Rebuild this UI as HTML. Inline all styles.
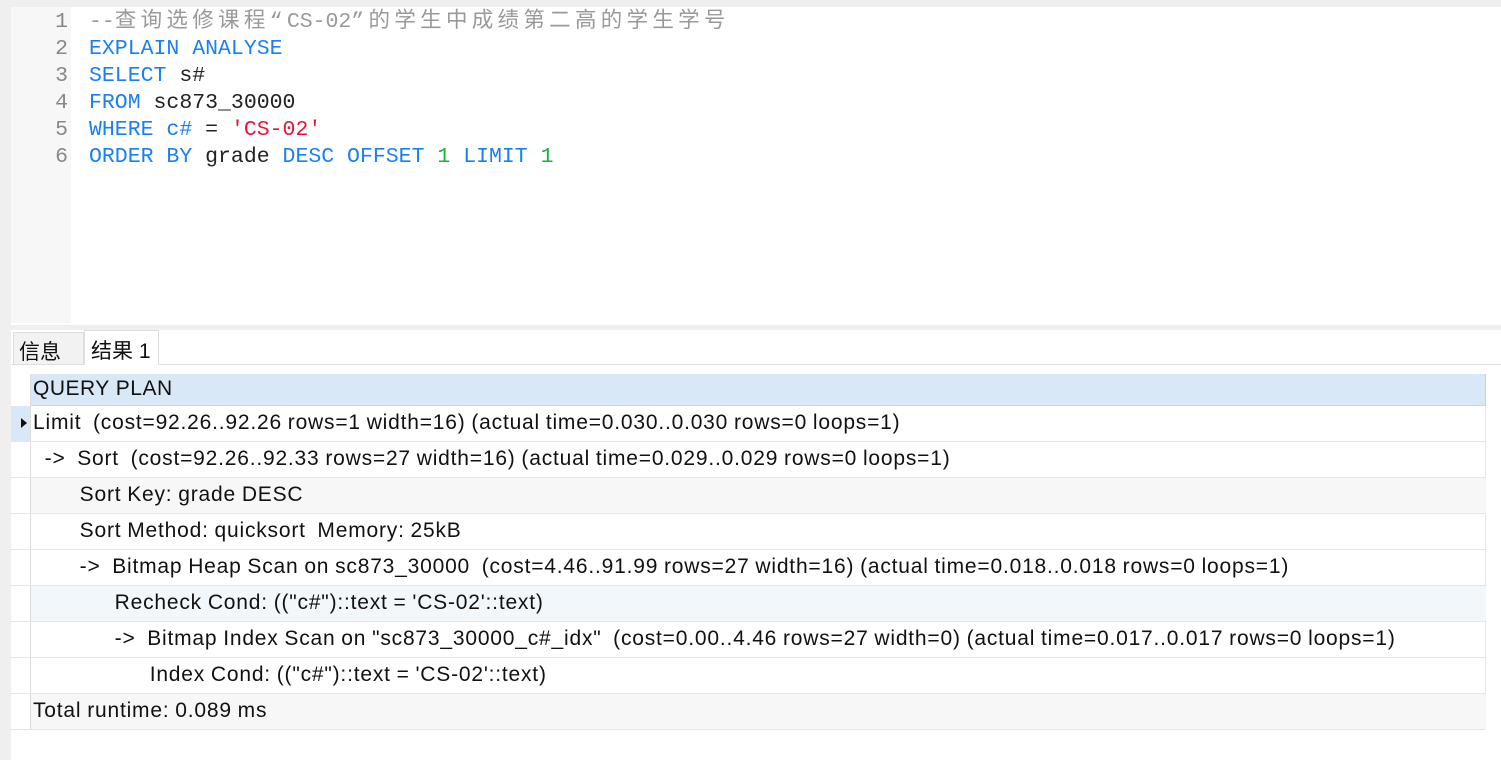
<!DOCTYPE html>
<html><head><meta charset="utf-8"><style>
*{margin:0;padding:0;box-sizing:border-box}
body{width:1501px;height:760px;background:#fff;position:relative;overflow:hidden;font-family:"Liberation Sans","Noto Sans CJK SC",sans-serif}
.abs{position:absolute}
.code{font-family:"Liberation Mono","Noto Sans CJK SC",monospace;font-size:21.5px;white-space:pre;line-height:27px}
.ln{color:#888;text-align:right;width:57px}
.k{color:#1a7ff0}.s{color:#e8133c}.n{color:#19b23c}.c{color:#999}.t{color:#222}
.cj{letter-spacing:4.3px}
.row{position:absolute;left:11px;width:1475px;height:36px;border-bottom:1px solid #e6e6e6;font-size:21px;letter-spacing:0.8px;word-spacing:-0.8px;white-space:pre;color:#111}
.row .h{position:absolute;left:0;top:0;width:20px;height:35px;border-right:1px solid #ddd;background:#fff}
.row .d{position:absolute;left:22px;top:5px}
</style></head><body>
<div class="abs" style="left:0;top:0;width:11px;height:760px;background:#efefef"></div>
<div class="abs" style="left:11px;top:0;width:1490px;height:7px;background:#efefef"></div>
<div class="abs" style="left:11px;top:7px;width:60px;height:316px;background:#f7f7f7"></div>
<div class="abs code ln" style="left:11px;top:9px">1<br>2<br>3<br>4<br>5<br>6</div>
<div class="abs code" style="left:89px;top:9px"><span class="c">--<span class="cj">查询选修课程“</span>CS-02<span class="cj">”的学生中成绩第二高的学生学号</span></span>
<span class="k">EXPLAIN ANALYSE</span>
<span class="k">SELECT</span> <span class="t">s#</span>
<span class="k">FROM</span> <span class="t">sc873_30000</span>
<span class="k">WHERE</span> <span class="k">c#</span> <span class="t">=</span> <span class="s">'CS-02'</span>
<span class="k">ORDER BY</span> <span class="t">grade</span> <span class="k">DESC OFFSET</span> <span class="n">1</span> <span class="k">LIMIT</span> <span class="n">1</span></div>
<div class="abs" style="left:11px;top:325px;width:1490px;height:5px;background:#efefef"></div>
<div class="abs" style="left:11px;top:364px;width:1490px;height:1px;background:#ddd"></div>
<div class="abs" style="left:13px;top:332px;width:71px;height:33px;background:#f2f2f2;border:1px solid #ddd;font-size:21px;padding:3px 0 0 5px;color:#111">信息</div>
<div class="abs" style="left:84px;top:330px;width:75px;height:35px;background:#fff;border:1px solid #ddd;border-bottom:none;font-size:21px;padding:4px 0 0 6px;color:#111">结果 1</div>
<div class="abs" style="left:30px;top:374px;width:1456px;height:32px;background:#d8e8f6;border-bottom:1px solid #c8d8e6;border-right:1px solid #c8d0d8;font-size:21px;letter-spacing:0.5px;padding:3px 0 0 3px;color:#111">QUERY PLAN</div>
<div class="abs" style="left:11px;top:374px;width:20px;height:32px;background:#fff;border-right:1px solid #ddd"></div>
<div class="abs" style="left:1485px;top:406px;width:1px;height:324px;background:#e6e6e6"></div>

<div class="row" style="top:406px"><div class="h" style="background:#d8e8f6"><span style="position:absolute;left:10px;top:12px;border-left:6px solid #111;border-top:5px solid transparent;border-bottom:5px solid transparent"></span></div><div class="d">Limit  (cost=92.26..92.26 rows=1 width=16) (actual time=0.030..0.030 rows=0 loops=1)</div></div>
<div class="row" style="top:442px"><div class="h"></div><div class="d">  ->  Sort  (cost=92.26..92.33 rows=27 width=16) (actual time=0.029..0.029 rows=0 loops=1)</div></div>
<div class="row" style="top:478px;background:#f7f7f7"><div class="h"></div><div class="d">        Sort Key: grade DESC</div></div>
<div class="row" style="top:514px"><div class="h"></div><div class="d">        Sort Method: quicksort  Memory: 25kB</div></div>
<div class="row" style="top:550px"><div class="h"></div><div class="d">        ->  Bitmap Heap Scan on sc873_30000  (cost=4.46..91.99 rows=27 width=16) (actual time=0.018..0.018 rows=0 loops=1)</div></div>
<div class="row" style="top:586px;background:#f2f7fc"><div class="h"></div><div class="d">              Recheck Cond: (("c#")::text = 'CS-02'::text)</div></div>
<div class="row" style="top:622px"><div class="h"></div><div class="d">              ->  Bitmap Index Scan on "sc873_30000_c#_idx"  (cost=0.00..4.46 rows=27 width=0) (actual time=0.017..0.017 rows=0 loops=1)</div></div>
<div class="row" style="top:658px"><div class="h"></div><div class="d">                    Index Cond: (("c#")::text = 'CS-02'::text)</div></div>
<div class="row" style="top:694px;background:#f7f7f7"><div class="h"></div><div class="d">Total runtime: 0.089 ms</div></div>
</body></html>
